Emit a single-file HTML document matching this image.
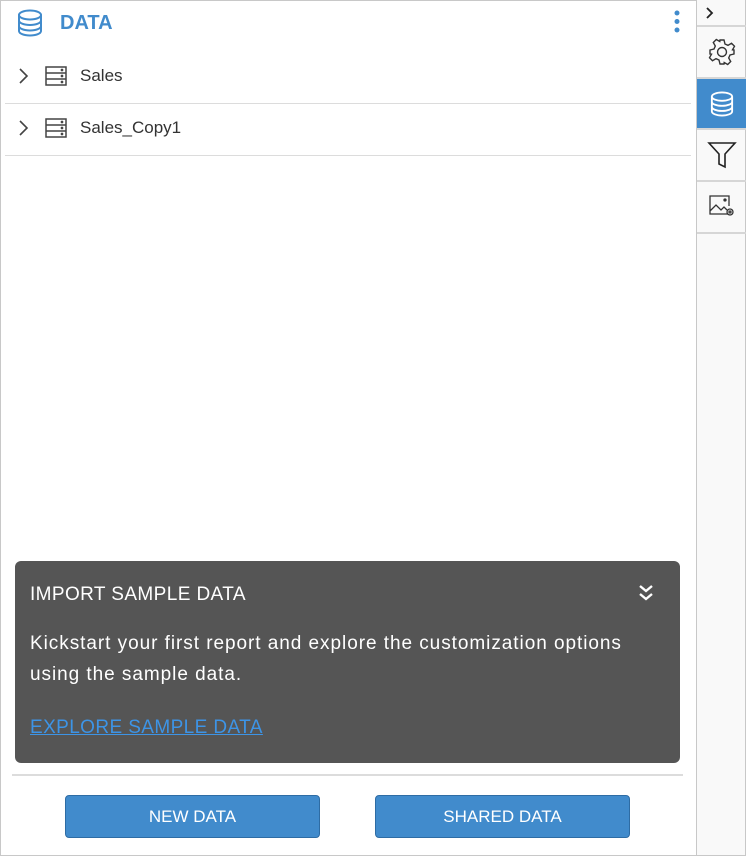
<!DOCTYPE html>
<html><head><style>
*{margin:0;padding:0;box-sizing:border-box}
body{width:746px;height:856px;background:#fff;font-family:"Liberation Sans",sans-serif;position:relative;overflow:hidden}
.frame{position:absolute;left:0;top:0;width:746px;height:856px;border:1px solid #c8c8c8}
.abs{position:absolute}
.side{position:absolute;left:696px;top:0;width:50px;height:856px;background:#f9f9f9;border-left:1px solid #c8c8c8;border-right:1px solid #c8c8c8;border-bottom:1px solid #c8c8c8}
.tab{position:absolute;left:0;width:49px;height:50px;border-bottom:2px solid #d6d6d6;display:flex;align-items:center;justify-content:center}
.hr{position:absolute;height:1px;background:#dcdcdc}
.row{position:absolute;left:18px;font-size:17px;color:#333;display:flex;align-items:center}
.btn{position:absolute;top:795px;height:43px;width:255px;background:#418bcc;border:1px solid #2e6ca4;border-radius:4px;color:#fff;font-size:17px;display:flex;align-items:center;justify-content:center}
</style></head><body>
<div class="frame"></div>
<svg class="abs" style="left:17px;top:9px" width="26" height="28" viewBox="0 0 26 28" fill="none" stroke="#418bcc" stroke-width="2"><ellipse cx="13" cy="6" rx="11" ry="4.5"/><path d="M2 6v16c0 2.5 5 4.5 11 4.5s11-2 11-4.5V6M2 11.5c0 2.5 5 4.5 11 4.5s11-2 11-4.5M2 17c0 2.5 5 4.5 11 4.5s11-2 11-4.5"/></svg>
<div class="abs" style="left:60px;top:12px;font-size:20px;font-weight:bold;color:#418bcc">DATA</div>
<svg class="abs" style="left:673px;top:10px" width="8" height="24"><circle cx="4" cy="3" r="2.5" fill="#418bcc"/><circle cx="4" cy="11.5" r="2.5" fill="#418bcc"/><circle cx="4" cy="20" r="2.5" fill="#418bcc"/></svg>

<div class="row" style="top:65px;height:22px">
<svg width="12" height="18" viewBox="0 0 12 18" fill="none" stroke="#444" stroke-width="1.6"><path d="M2 2l7 7-7 7"/></svg>
<svg style="margin-left:15px" width="22" height="20" viewBox="0 0 22 20" fill="none" stroke="#444" stroke-width="1.5"><rect x="1" y="1" width="20" height="18"/><path d="M1 7h20M1 13h20"/><circle cx="17" cy="4" r=".6" fill="#444"/><circle cx="17" cy="10" r=".6" fill="#444"/><circle cx="17" cy="16" r=".6" fill="#444"/></svg>
<span style="margin-left:13px">Sales</span></div>
<div class="hr" style="left:5px;width:686px;top:103px"></div>
<div class="row" style="top:117px;height:22px">
<svg width="12" height="18" viewBox="0 0 12 18" fill="none" stroke="#444" stroke-width="1.6"><path d="M2 2l7 7-7 7"/></svg>
<svg style="margin-left:15px" width="22" height="20" viewBox="0 0 22 20" fill="none" stroke="#444" stroke-width="1.5"><rect x="1" y="1" width="20" height="18"/><path d="M1 7h20M1 13h20"/><circle cx="17" cy="4" r=".6" fill="#444"/><circle cx="17" cy="10" r=".6" fill="#444"/><circle cx="17" cy="16" r=".6" fill="#444"/></svg>
<span style="margin-left:13px">Sales_Copy1</span></div>
<div class="hr" style="left:5px;width:686px;top:155px"></div>

<div class="abs" style="left:15px;top:561px;width:665px;height:202px;background:#555;border-radius:6px;color:#fff">
 <div class="abs" style="left:15px;top:23px;font-size:19px;letter-spacing:0.4px">IMPORT SAMPLE DATA</div>
 <svg class="abs" style="left:622px;top:22px" width="18" height="20" viewBox="0 0 18 20" fill="none" stroke="#fff" stroke-width="2.4"><path d="M3 3l6 5 6-5M3 11l6 5 6-5"/></svg>
 <div class="abs" style="left:15px;top:67px;width:650px;white-space:nowrap;font-size:19px;line-height:31px;letter-spacing:0.95px">Kickstart your first report and explore the customization options<br>using the sample data.</div>
 <div class="abs" style="left:15px;top:156px;font-size:19px;color:#3d94e6;text-decoration:underline;letter-spacing:0.4px">EXPLORE SAMPLE DATA</div>
</div>
<div class="abs" style="left:12px;top:774px;width:671px;height:2px;background:#dcdcdc"></div>
<div class="btn" style="left:65px">NEW DATA</div>
<div class="btn" style="left:375px">SHARED DATA</div>

<div class="side">
 <div class="tab" style="top:0;height:27px;justify-content:flex-start;padding-left:8px"><svg width="10" height="14" viewBox="0 0 10 14" fill="none" stroke="#222" stroke-width="1.8"><path d="M2 2l5 5-5 5"/></svg></div>
 <div class="tab" style="top:27px;height:52px"><svg width="28" height="28" viewBox="0 0 28 28" fill="none" stroke="#333" stroke-width="1.4"><path d="M12 2h4l1 4 3 1.3 3.5-2 3 3-2 3.5L26 12v4l-4 1-1.3 3 2 3.5-3 3-3.5-2L16 26h-4l-1-4-3-1.3-3.5 2-3-3 2-3.5L2 16v-4l4-1 1.3-3-2-3.5 3-3 3.5 2z"/><circle cx="14" cy="14" r="4.5"/></svg></div>
 <div class="tab" style="top:79px;height:51px;background:#418bcc"><svg width="24" height="26" viewBox="0 0 26 28" fill="none" stroke="#fff" stroke-width="2"><ellipse cx="13" cy="6" rx="11" ry="4.5"/><path d="M2 6v16c0 2.5 5 4.5 11 4.5s11-2 11-4.5V6M2 11.5c0 2.5 5 4.5 11 4.5s11-2 11-4.5M2 17c0 2.5 5 4.5 11 4.5s11-2 11-4.5"/></svg></div>
 <div class="tab" style="top:130px;height:52px"><svg width="30" height="28" viewBox="0 0 30 28" fill="none" stroke="#222" stroke-width="1.6"><path d="M2 2h26L18 13v13l-6-3V13z"/></svg></div>
 <div class="tab" style="top:182px;height:52px"><svg width="28" height="26" viewBox="0 0 28 26" fill="none" stroke="#333" stroke-width="1.3"><path d="M20 20H2V2h19v10M2 17l6-6 5 5 3-3 3 3"/><circle cx="17" cy="6" r="1" fill="#333"/><circle cx="22" cy="18" r="3"/><circle cx="22" cy="18" r="1"/></svg></div>
</div>
</body></html>
